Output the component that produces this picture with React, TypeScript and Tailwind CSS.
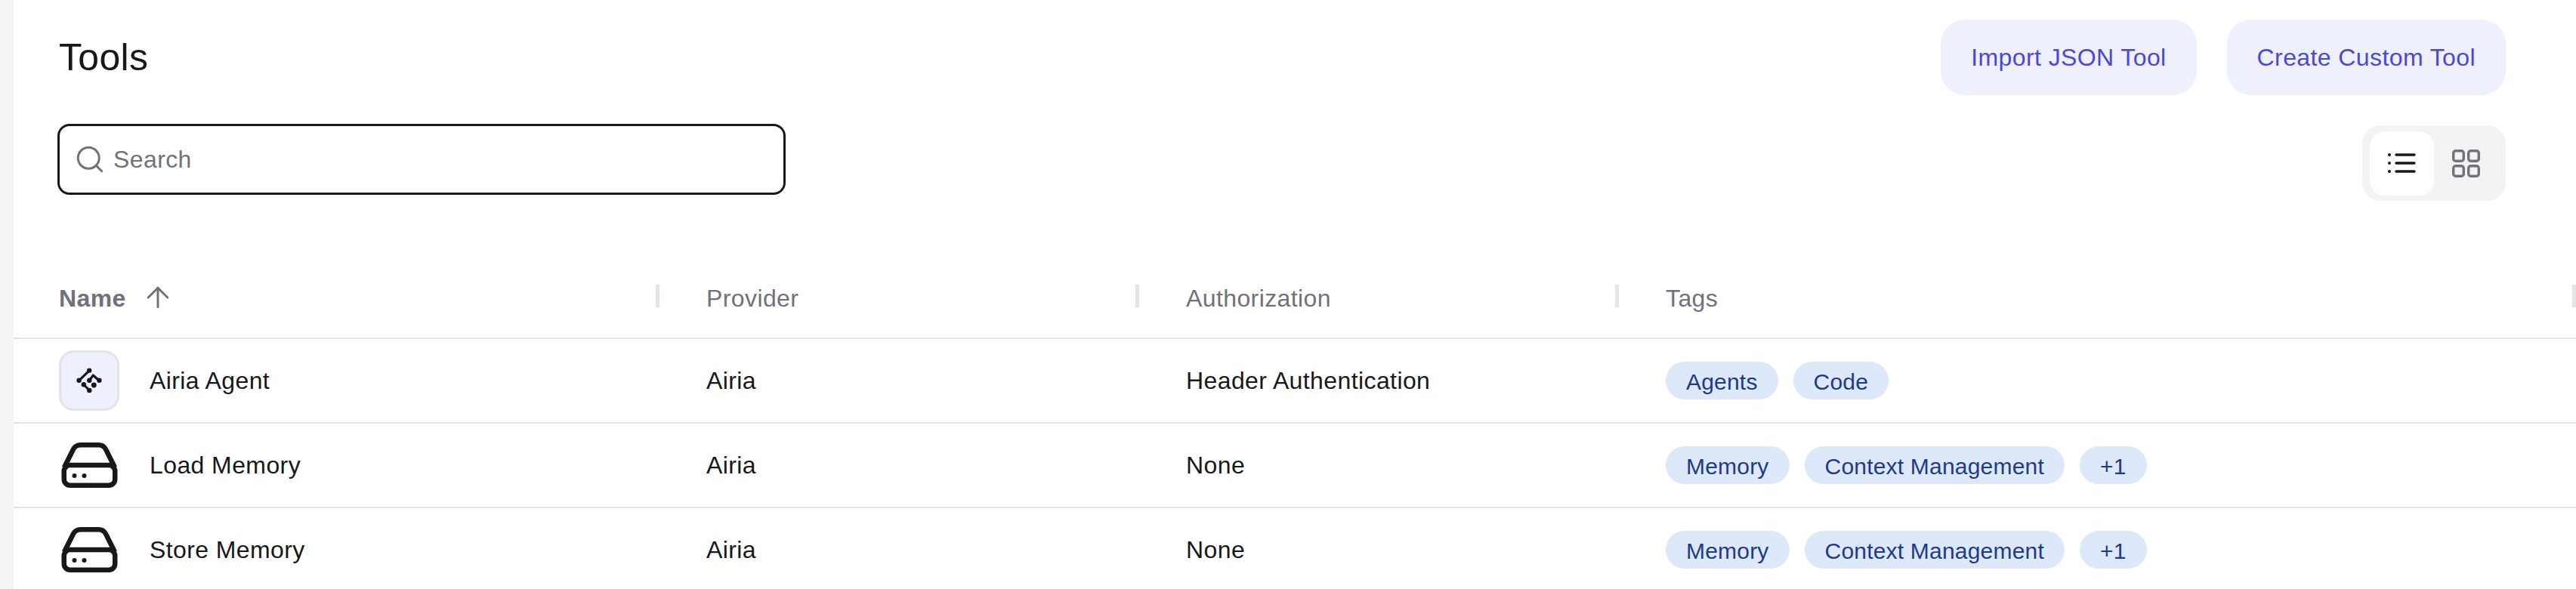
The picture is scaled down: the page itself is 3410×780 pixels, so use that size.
import { ArrowUp, Search } from "lucide-react";

function DriveIcon() {
  return (
    <svg width="75" height="60" viewBox="0 0 74 60" fill="none" stroke="#18181b" strokeWidth="6.5" className="ml-[3px] shrink-0">
      <rect x="3.25" y="30" width="67.5" height="26.75" rx="8" />
      <path d="M3.5 33 L15.5 9 Q18.5 3.25 25 3.25 H49 Q55.5 3.25 58.5 9 L70.5 33" strokeLinejoin="round" />
      <circle cx="17" cy="44" r="3" fill="#18181b" stroke="none" />
      <circle cx="30" cy="44" r="3" fill="#18181b" stroke="none" />
    </svg>
  );
}

function AiriaIcon() {
  return (
    <div className="flex h-[80px] w-[80px] shrink-0 items-center justify-center rounded-[20px] border-[3px] border-[#e4e4e7] bg-[#eef0fd]">
      <svg width="36" height="36" viewBox="0 0 36 36" fill="none" stroke="#18181b" strokeWidth="3.2" strokeLinecap="round" strokeLinejoin="round">
        <path d="M5 17.7 L18 4.8" />
        <path d="M18.3 17.7 L23.3 11 L31 17.7" />
        <path d="M11 23.3 L18.3 31" />
        <g fill="#18181b" stroke="none">
          <circle cx="4.6" cy="17.7" r="3.2" />
          <circle cx="18.2" cy="4.6" r="3.2" />
          <circle cx="18.3" cy="17.7" r="3.2" />
          <circle cx="31.4" cy="17.7" r="3.2" />
          <circle cx="10.8" cy="23.3" r="3.2" />
          <circle cx="18.3" cy="31" r="3.2" />
          <circle cx="24.3" cy="24" r="3.4" />
        </g>
      </svg>
    </div>
  );
}

function ListIcon() {
  return (
    <svg width="38" height="28" viewBox="0 0 38 28" fill="none" stroke="#18181b" strokeWidth="3.4" strokeLinecap="round">
      <path d="M11 3 H35 M11 14 H35 M11 25 H35" />
      <g fill="#18181b" stroke="none">
        <circle cx="2" cy="3" r="2" />
        <circle cx="2" cy="14" r="2" />
        <circle cx="2" cy="25" r="2" />
      </g>
    </svg>
  );
}

function GridIcon() {
  return (
    <svg width="37" height="37" viewBox="0 0 37 37" fill="none" stroke="#71717a" strokeWidth="3.4">
      <rect x="1.7" y="1.7" width="13.6" height="13.6" rx="3" />
      <rect x="21.7" y="1.7" width="13.6" height="13.6" rx="3" />
      <rect x="1.7" y="21.7" width="13.6" height="13.6" rx="3" />
      <rect x="21.7" y="21.7" width="13.6" height="13.6" rx="3" />
    </svg>
  );
}

function Handle() {
  return <div className="h-[30px] w-[5px] shrink-0 bg-[#e4e4e7]" />;
}

function Pill({ label }: { label: string }) {
  return (
    <span className="flex h-[50px] items-center rounded-[25px] bg-[#dde8fb] px-[27px] pt-[2px] text-[30px] tracking-[0.2px] text-[#1e3a8a]">
      {label}
    </span>
  );
}

const rows = [
  { name: "Airia Agent", auth: "Header Authentication", tags: ["Agents", "Code"], logo: true },
  { name: "Load Memory", auth: "None", tags: ["Memory", "Context Management", "+1"], logo: false },
  { name: "Store Memory", auth: "None", tags: ["Memory", "Context Management", "+1"], logo: false },
];

const cols = "grid grid-cols-[855px_635px_635px_1267px]";

export default function App() {
  return (
    <div className="flex h-[780px] w-[3410px] overflow-hidden bg-white text-[32px] tracking-[0.4px] text-[#18181b] [font-family:'Liberation_Sans',Arial,sans-serif]">
      <div className="w-[18px] shrink-0 bg-[#f5f5f5]" />
      <main className="min-w-0 flex-1">
        <div className="pl-[58px] pr-[93px]">
          <div className="flex items-center justify-between pt-[26px]">
            <h1 className="ml-[2px] text-[50px] font-normal leading-none tracking-[0.3px]">Tools</h1>
            <div className="flex gap-[40px]">
              <button className="h-[100px] rounded-[32px] bg-[#eef0fd] px-[40px] text-[#4a47dc]">Import JSON Tool</button>
              <button className="h-[100px] rounded-[32px] bg-[#eef0fd] px-[40px] text-[#4a47dc]">Create Custom Tool</button>
            </div>
          </div>
          <div className="mt-[38px] flex items-start justify-between">
            <div className="flex h-[94px] w-[964px] items-center gap-[10px] rounded-[16px] border-[3px] border-[#18181b] pl-[19px]">
              <Search size={42} strokeWidth={1.7} className="shrink-0 text-[#71717a]" />
              <input
                placeholder="Search"
                className="min-w-0 flex-1 bg-transparent outline-none placeholder:text-[#71717a]"
              />
            </div>
            <div className="mt-[2px] flex h-[100px] w-[190px] items-center rounded-[24px] bg-[#f3f3f4] pl-[10px]">
              <div className="flex h-[85px] w-[85px] items-center justify-center rounded-[20px] bg-white">
                <ListIcon />
              </div>
              <div className="ml-[24px]">
                <GridIcon />
              </div>
            </div>
          </div>
        </div>

        <div className="mt-[71px]">
          <div className={`${cols} h-[112px] border-b-2 border-[#e4e4e7] text-[#71717a]`}>
            <div className="flex items-center justify-between pl-[60px]">
              <div className="flex items-center gap-[20px] pt-[4px]">
                <span className="pt-[2px] font-bold">Name</span>
                <ArrowUp size={44} strokeWidth={1.6} />
              </div>
              <Handle />
            </div>
            {["Provider", "Authorization", "Tags"].map((h) => (
              <div key={h} className="flex items-center justify-between pl-[62px]">
                <span className="pt-[6px]">{h}</span>
                <Handle />
              </div>
            ))}
          </div>
          {rows.map((r) => (
            <div key={r.name} className={`${cols} h-[112px] border-b-2 border-[#e4e4e7]`}>
              <div className="flex items-center pl-[60px]">
                <div className="flex w-[120px] shrink-0 items-center">
                  {r.logo ? <AiriaIcon /> : <DriveIcon />}
                </div>
                <span>{r.name}</span>
              </div>
              <div className="flex items-center pl-[62px]">Airia</div>
              <div className="flex items-center pl-[62px]">{r.auth}</div>
              <div className="flex items-center gap-[20px] pl-[62px]">
                {r.tags.map((t) => (
                  <Pill key={t} label={t} />
                ))}
              </div>
            </div>
          ))}
        </div>
      </main>
    </div>
  );
}
